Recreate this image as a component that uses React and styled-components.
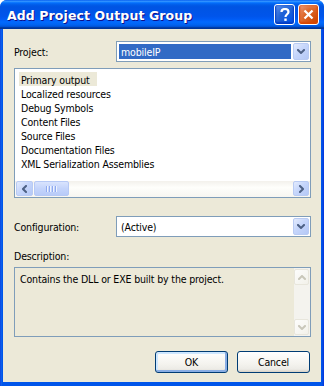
import React from 'react';
import styled, { createGlobalStyle } from 'styled-components';

const Global = createGlobalStyle`
  html, body { margin: 0; padding: 0; background: #ffffff; }
  body {
    font-family: "DejaVu Sans Condensed", "DejaVu Sans", sans-serif;
    font-size: 10.5px;
    letter-spacing: -0.15px;
    color: #000;
  }
  * { box-sizing: border-box; }
`;

const Window = styled.div`
  width: 324px;
  height: 386px;
  display: flex;
  flex-direction: column;
  background: #0054e3;
  border-radius: 7px 7px 0 0;
  overflow: hidden;
`;

const TitleBar = styled.div`
  height: 29px;
  flex: none;
  display: flex;
  align-items: center;
  padding: 0 5px 0 7px;
  gap: 3px;
  background: linear-gradient(
    #0058ee 0%, #3593ff 4%, #288eff 6%, #127dff 8%, #036ffc 10%, #0262ee 14%,
    #0057e5 20%, #0054e3 24%, #0055eb 56%, #005bf5 66%, #026afe 76%, #0062ef 86%,
    #0052d6 92%, #0040ab 94%, #003092 100%
  );
`;

const Title = styled.div`
  flex: 1;
  color: #fff;
  font-family: "DejaVu Sans", "Liberation Sans", sans-serif;
  font-weight: bold;
  font-size: 12.5px;
  letter-spacing: 0.1px;
  text-shadow: 1px 1px 0 #0f1089;
  padding-top: 1px;
`;

const CaptionButton = styled.div`
  width: 21px;
  height: 21px;
  border: 1px solid #fff;
  border-radius: 3px;
  display: flex;
  align-items: center;
  justify-content: center;
  background: ${p => p.$close
    ? 'radial-gradient(circle at 90% 90%, #cc4600 0%, #dc6527 55%, #f0a082 100%)'
    : 'radial-gradient(circle at 90% 90%, #0054e9 0%, #2263d5 55%, #6696eb 100%)'};
  box-shadow: inset 0 -1px 2px 1px ${p => (p.$close ? '#da4600' : '#003ac4')};
`;

const Frame = styled.div`
  flex: 1;
  display: flex;
  padding: 0 3px 4px 3px;
  background: linear-gradient(to right, #0831d9 0, #166aee 1px, #0055ea 2px, #0055ea calc(100% - 2px), #0831d9 100%);
`;

const Client = styled.div`
  flex: 1;
  background: #ece9d8;
  display: flex;
  flex-direction: column;
  padding: 12px 10px 0 11px;
`;

const FormRow = styled.div`
  display: grid;
  grid-template-columns: 102px 195px;
  align-items: center;
  height: 21px;
  margin-top: ${p => p.$top || 0}px;
`;

const Label = styled.div`
  line-height: 13px;
  padding-top: 1px;
  margin-top: ${p => p.$top || 0}px;
`;

const Combo = styled.div`
  height: 21px;
  border: 1px solid #7f9db9;
  background: #fff;
  display: flex;
  align-items: center;
  padding: 1px;
`;

const ComboValue = styled.div`
  flex: 1;
  height: 15px;
  margin: 0 2px 1px 1px;
  padding: 1px 0 0 2px;
  line-height: 14px;
  background: ${p => (p.$selected ? '#316ac5' : 'transparent')};
  color: ${p => (p.$selected ? '#fff' : '#000')};
`;

const ArrowButton = styled.div`
  width: ${p => p.$w || 16}px;
  height: ${p => p.$h || 17}px;
  flex: none;
  border-radius: 2px;
  display: flex;
  align-items: center;
  justify-content: center;
  border: 1px solid ${p => (p.$disabled ? '#e8e6dc' : '#b9cbf3')};
  background: ${p => (p.$disabled
    ? 'linear-gradient(135deg, #fdfdfc, #f2f1ea)'
    : 'linear-gradient(135deg, #e3ebfd 0%, #c6d6fb 45%, #b4c8f6 100%)')};
`;

const ListBox = styled.div`
  margin-top: 6px;
  height: 130px;
  border: 1px solid #7f9db9;
  background: #fff;
  display: flex;
  flex-direction: column;
`;

const Items = styled.div`
  flex: 1;
  padding: 3px 0 0 4px;
  display: flex;
  flex-direction: column;
  align-items: flex-start;
`;

const Item = styled.div`
  height: 14px;
  line-height: 14px;
  padding: 1px 7px 0 2px;
  background: ${p => (p.$selected ? '#ece9d8' : 'transparent')};
`;

const HScroll = styled.div`
  height: 16px;
  flex: none;
  display: flex;
  align-items: stretch;
  padding: 0 1px 1px 1px;
  background: linear-gradient(#f3f1ec, #fefefb 40%, #f7f6f1);
`;

const Track = styled.div`
  flex: 1;
  display: flex;
  padding: 0 0 0 1px;
`;

const Thumb = styled.div`
  width: 35px;
  border: 1px solid #b6c9f5;
  border-radius: 2px;
  background: linear-gradient(#d9e4fd, #c4d4fb 50%, #b8cbf8);
  display: flex;
  align-items: center;
  justify-content: center;
  gap: 1px;
`;

const Grip = styled.span`
  width: 1px;
  height: 6px;
  background: #8faaf0;
  box-shadow: 1px 0 0 #eef3fe;
  margin-right: 1px;
`;

const DescBox = styled.div`
  margin-top: 4px;
  height: 70px;
  border: 1px solid #7f9db9;
  background: #ece9d8;
  display: flex;
`;

const DescText = styled.div`
  flex: 1;
  padding: 5px 5px;
  line-height: 13px;
`;

const VScroll = styled.div`
  width: 16px;
  display: flex;
  flex-direction: column;
  justify-content: space-between;
  padding: 1px 1px 1px 0;
  background: #f4f3ee;
`;

const ButtonRow = styled.div`
  display: flex;
  justify-content: flex-end;
  gap: 9px;
  margin-top: 14px;
  padding-right: 1px;
`;

const Button = styled.button`
  width: 73px;
  height: 22px;
  border: 1px solid #003c74;
  border-radius: 3px;
  font-family: inherit;
  font-size: inherit;
  letter-spacing: inherit;
  color: #000;
  padding: 0;
  background: linear-gradient(#ffffff 0%, #f4f3ee 60%, #ecebe6 86%, #d6d0c5 100%);
  box-shadow: ${p => (p.$default
    ? 'inset -1px -1px 0 1px #89ade4, inset 1px 1px 0 1px #cee7ff'
    : 'none')};
`;

const Chevron = ({ dir = 'down', color = '#4d6185' }) => {
  const paths = {
    down: 'M1 1 L4 4 L7 1',
    up: 'M1 4 L4 1 L7 4',
    left: 'M4 1 L1 4 L4 7',
    right: 'M1 1 L4 4 L1 7',
  };
  const horiz = dir === 'left' || dir === 'right';
  return (
    <svg width={horiz ? 5 : 8} height={horiz ? 8 : 5} viewBox={horiz ? '0 0 5 8' : '0 0 8 5'}>
      <path d={paths[dir]} fill="none" stroke={color} strokeWidth="2" strokeLinecap="square" />
    </svg>
  );
};

const items = [
  'Primary output',
  'Localized resources',
  'Debug Symbols',
  'Content Files',
  'Source Files',
  'Documentation Files',
  'XML Serialization Assemblies',
];

export default function App() {
  return (
    <>
      <Global />
      <Window>
        <TitleBar>
          <Title>Add Project Output Group</Title>
          <CaptionButton>
            <svg width="10" height="14" viewBox="0 0 10 14">
              <path d="M1.5 4 C1.5 1.5 3 1 5 1 C7.5 1 8.5 2.5 8.5 4 C8.5 6 5.5 6.5 5.5 9" fill="none" stroke="#fff" strokeWidth="2.2" />
              <rect x="4.3" y="10.5" width="2.4" height="2.4" fill="#fff" />
            </svg>
          </CaptionButton>
          <CaptionButton $close>
            <svg width="11" height="11" viewBox="0 0 11 11">
              <path d="M1.5 1.5 L9.5 9.5 M9.5 1.5 L1.5 9.5" stroke="#fff" strokeWidth="2.3" />
            </svg>
          </CaptionButton>
        </TitleBar>
        <Frame>
          <Client>
            <FormRow>
              <Label>Project:</Label>
              <Combo>
                <ComboValue $selected>mobileIP</ComboValue>
                <ArrowButton><Chevron dir="down" /></ArrowButton>
              </Combo>
            </FormRow>
            <ListBox>
              <Items>
                {items.map((t, i) => (
                  <Item key={t} $selected={i === 0}>{t}</Item>
                ))}
              </Items>
              <HScroll>
                <ArrowButton $w={17} $h={15}><Chevron dir="left" /></ArrowButton>
                <Track>
                  <Thumb><Grip /><Grip /><Grip /><Grip /></Thumb>
                </Track>
                <ArrowButton $w={16} $h={15}><Chevron dir="right" /></ArrowButton>
              </HScroll>
            </ListBox>
            <FormRow $top={18}>
              <Label>Configuration:</Label>
              <Combo>
                <ComboValue>(Active)</ComboValue>
                <ArrowButton><Chevron dir="down" /></ArrowButton>
              </Combo>
            </FormRow>
            <Label $top={12}>Description:</Label>
            <DescBox>
              <DescText>Contains the DLL or EXE built by the project.</DescText>
              <VScroll>
                <ArrowButton $disabled $w={15} $h={16}><Chevron dir="up" color="#c9c7ba" /></ArrowButton>
                <ArrowButton $disabled $w={15} $h={16}><Chevron dir="down" color="#c9c7ba" /></ArrowButton>
              </VScroll>
            </DescBox>
            <ButtonRow>
              <Button $default>OK</Button>
              <Button>Cancel</Button>
            </ButtonRow>
          </Client>
        </Frame>
      </Window>
    </>
  );
}
